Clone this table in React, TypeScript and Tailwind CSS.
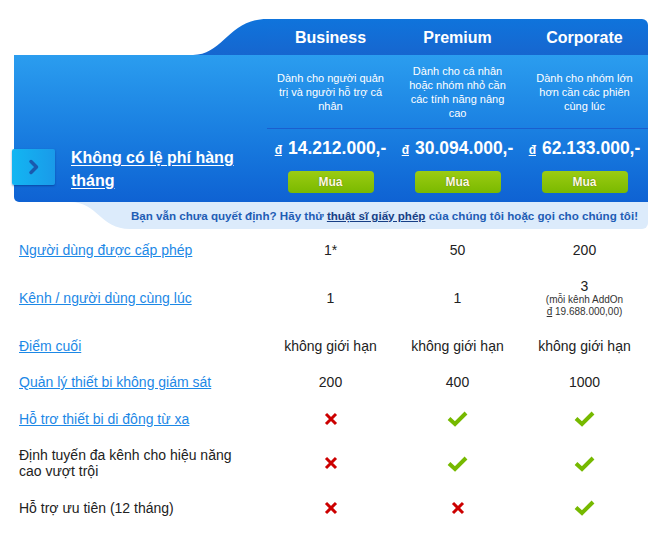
import { ReactNode } from 'react';

const font = { fontFamily: '"Liberation Sans", Arial, sans-serif' };

interface Plan {
  name: string;
  desc: string;
  price: string;
}

const plans: Plan[] = [
  { name: 'Business', desc: 'Dành cho người quản trị và người hỗ trợ cá nhân', price: '14.212.000,-' },
  { name: 'Premium', desc: 'Dành cho cá nhân hoặc nhóm nhỏ cần các tính năng nâng cao', price: '30.094.000,-' },
  { name: 'Corporate', desc: 'Dành cho nhóm lớn hơn cần các phiên cùng lúc', price: '62.133.000,-' },
];

function Cross() {
  return (
    <svg width="14" height="14" viewBox="0 0 14 14">
      <path d="M2 2 L12 12 M12 2 L2 12" stroke="#cc0000" strokeWidth="3" />
    </svg>
  );
}

function Check() {
  return (
    <svg width="21" height="17" viewBox="0 0 21 17">
      <path d="M2 8.5 L8 14 L19 3" stroke="#76b900" strokeWidth="4" fill="none" />
    </svg>
  );
}

interface Row {
  label: string;
  link: boolean;
  values: ReactNode[];
}

const rows: Row[] = [
  { label: 'Người dùng được cấp phép', link: true, values: ['1*', '50', '200'] },
  {
    label: 'Kênh / người dùng cùng lúc',
    link: true,
    values: [
      '1',
      '1',
      <div className="flex flex-col items-center">
        <span className="leading-[16px]">3</span>
        <span className="text-[10px] leading-[12px] text-[#333]">(mỗi kênh AddOn</span>
        <span className="text-[10px] leading-[12px] text-[#333]">
          <span className="underline">đ</span> 19.688.000,00)
        </span>
      </div>,
    ],
  },
  { label: 'Điểm cuối', link: true, values: ['không giới hạn', 'không giới hạn', 'không giới hạn'] },
  { label: 'Quản lý thiết bi không giám sát', link: true, values: ['200', '400', '1000'] },
  { label: 'Hỗ trơ thiết bi di đông từ xa', link: true, values: [<Cross />, <Check />, <Check />] },
  { label: 'Định tuyến đa kênh cho hiệu năng cao vượt trội', link: false, values: [<Cross />, <Check />, <Check />] },
  { label: 'Hỗ trợ ưu tiên (12 tháng)', link: false, values: [<Cross />, <Cross />, <Check />] },
];

export default function App() {
  return (
    <div className="w-[670px] h-[535px] bg-white overflow-hidden" style={font}>
      {/* Header tab with curve */}
      <div className="flex mt-[19px] ml-[14px] h-[36px]">
        <div className="w-[179px]" />
        <svg width="74" height="36" viewBox="0 0 74 36" className="block">
          <defs>
            <linearGradient id="tabg" x1="0" y1="0" x2="0" y2="1">
              <stop offset="0" stopColor="#0f74dc" />
              <stop offset="1" stopColor="#1666cf" />
            </linearGradient>
          </defs>
          <path d="M0 36 C 30 36, 36 0, 74 0 L74 36 Z" fill="url(#tabg)" />
        </svg>
        <div className="flex w-[381px] rounded-tr-[6px] bg-linear-to-b from-[#0f74dc] to-[#1666cf]">
          {plans.map((p) => (
            <div key={p.name} className="w-[127px] pt-[2px] flex items-center justify-center text-white font-bold text-[16px]">
              {p.name}
            </div>
          ))}
        </div>
      </div>

      {/* Main panel */}
      <div className="flex ml-[14px] w-[634px] h-[147px] rounded-bl-[5px] bg-linear-to-b from-[#2b9def] to-[#0f62d3]">
        <div className="w-[253px] flex flex-col justify-end pb-[10px]">
          <div className="flex items-start">
            <div className="-ml-[2px] mt-[3px] w-[43px] h-[36px] rounded-[2px] bg-linear-to-r from-[#12b6f2] to-[#1a9ae9] shadow-[0_1px_2px_rgba(0,40,120,0.5)] flex items-center justify-center">
              <svg width="12" height="16" viewBox="0 0 12 16">
                <path d="M3 2.5 L8.5 8 L3 13.5" stroke="#1a59ae" strokeWidth="3.5" fill="none" strokeLinecap="round" strokeLinejoin="round" />
              </svg>
            </div>
            <a className="ml-[16px] w-[180px] text-white font-bold text-[16px] leading-[23px] underline underline-offset-2">
              Không có lệ phí hàng tháng
            </a>
          </div>
        </div>
        {plans.map((p) => (
          <div key={p.name} className="w-[127px] flex flex-col">
            <div className="h-[73px] flex items-center justify-center px-[8px] text-center text-white text-[11px] leading-[14px]">
              {p.desc}
            </div>
            <div className="h-[74px] border-t border-[#1a5ecf] flex flex-col items-center pt-[10px]">
              <div className="flex items-baseline text-white font-bold leading-[18px]">
                <span className="text-[12px] underline mr-[6px]">đ</span>
                <span className="text-[17.5px]">{p.price}</span>
              </div>
              <button className="mt-[12px] w-[86px] h-[22px] rounded-[4px] bg-linear-to-b from-[#9bcc12] to-[#7ab900] text-[#fffbe0] font-bold text-[12px] [text-shadow:0_0_1px_rgba(60,80,0,0.9)]">
                Mua
              </button>
            </div>
          </div>
        ))}
      </div>

      {/* Light strip */}
      <div className="flex ml-[14px] w-[634px] h-[27px]">
        <div className="w-[56px]" />
        <svg width="60" height="27" viewBox="0 0 60 27" className="block">
          <path d="M0 0 L60 0 L60 27 C 30 27, 28 0, 0 0 Z" fill="#dcebfb" />
        </svg>
        <div className="flex-1 bg-[#dcebfb] rounded-br-[6px] flex items-center justify-end pr-[10px] text-[11.6px] font-bold text-[#1f5db5] whitespace-nowrap">
          Bạn vẫn chưa quyết định? Hãy thử&nbsp;
          <a className="underline text-[#173f86]">thuật sĩ giấy phép</a>
          &nbsp;của chúng tôi hoặc gọi cho chúng tôi!
        </div>
      </div>

      {/* Feature table */}
      <div className="mt-[3px] pl-[19px] grid grid-cols-[248px_127px_127px_127px]">
        {rows.map((r, i) => (
          <div key={i} className="contents">
            <div className="py-[10px] pr-[14px] flex items-center text-[14px] leading-[16px]">
              {r.link ? (
                <a className="text-[#1c88e6] underline">{r.label}</a>
              ) : (
                <span className="text-[#222]">{r.label}</span>
              )}
            </div>
            {r.values.map((v, j) => (
              <div key={j} className="py-[10px] flex items-center justify-center text-[14px] leading-[16px] text-[#222] text-center">
                {v}
              </div>
            ))}
          </div>
        ))}
      </div>
    </div>
  );
}
